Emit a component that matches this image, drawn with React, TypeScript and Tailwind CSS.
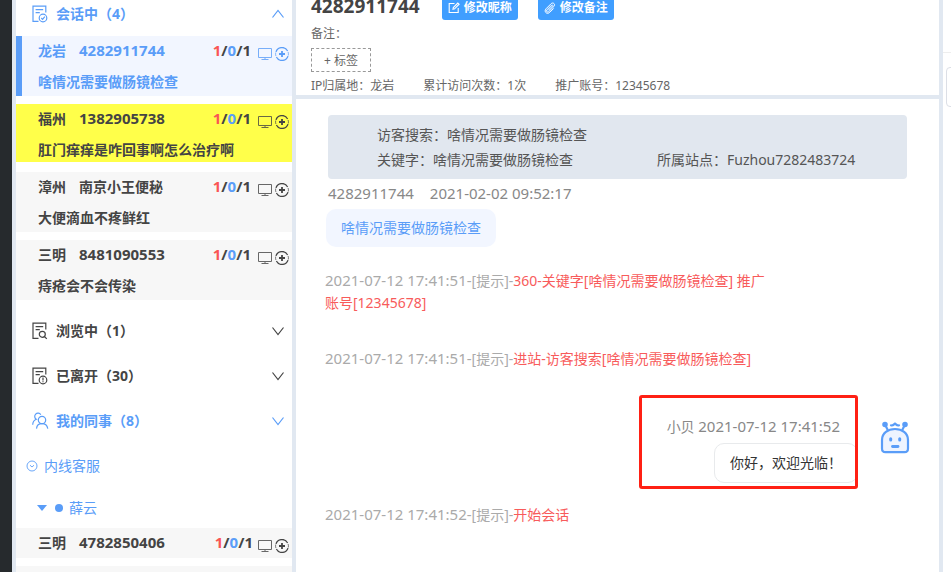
import type { ReactNode } from "react"
import clsx from "clsx"

type Visitor = {
  city: string
  name: string
  message?: string
  state?: "active" | "waiting"
}

const visitors: Visitor[] = [
  { city: "龙岩", name: "4282911744", message: "啥情况需要做肠镜检查", state: "active" },
  { city: "福州", name: "1382905738", message: "肛门痒痒是咋回事啊怎么治疗啊", state: "waiting" },
  { city: "漳州", name: "南京小王便秘", message: "大便滴血不疼鲜红" },
  { city: "三明", name: "8481090553", message: "痔疮会不会传染" },
]

function MonitorIcon() {
  return (
    <svg width="14" height="14" viewBox="0 0 14 14" fill="none" stroke="currentColor" strokeWidth="1" className="opacity-80">
      <path d="M.5 1.5h13v9H.5zM7 10.5v2M3.5 12.5h7" />
    </svg>
  )
}

function AddIcon() {
  return (
    <svg width="14" height="14" viewBox="0 0 14 14" fill="none" stroke="currentColor">
      <path d="M12.6 4A6.3 6.3 0 0 0 1 4.9M1.4 10A6.3 6.3 0 0 0 13 9.1" strokeWidth="1.3" />
      <path d="M.7 5.5A6.3 6.3 0 0 0 .9 9M13.3 8.5A6.3 6.3 0 0 0 13.1 5" strokeWidth=".7" />
      <path d="M7 4v6M4 7h6" strokeWidth="1.8" />
    </svg>
  )
}

function ListIcon({ children }: { children: ReactNode }) {
  return (
    <svg width="16" height="18" viewBox="0 0 16 18" fill="none" stroke="currentColor" strokeWidth="1.2">
      <path d="M6.5 16.4H1V1.1h12.8v6.4M3.6 4.6h7.6M3.6 7.6h4.2" />
      {children}
    </svg>
  )
}

function ChatIcon() {
  return (
    <ListIcon>
      <circle cx="11" cy="13" r="3.8" />
      <path d="m9.3 13 1.3 1.3 2.2-2.6" />
    </ListIcon>
  )
}

function BrowseIcon() {
  return (
    <ListIcon>
      <circle cx="10.3" cy="12.3" r="3" />
      <path d="m12.4 14.5 2.4 2.4" />
    </ListIcon>
  )
}

function LeftIcon() {
  return (
    <ListIcon>
      <circle cx="11" cy="13" r="3.8" />
      <path d="M11 10.6v3M11 14.3v1" />
    </ListIcon>
  )
}

function TeamIcon() {
  return (
    <svg width="17" height="18" viewBox="0 0 17 18" fill="none" stroke="currentColor" strokeWidth="1.2">
      <circle cx="10" cy="8" r="3.7" />
      <path d="M4.5 16.6c.3-3 2.5-4.9 5.5-4.9s5.2 1.9 5.8 4.9M8.8 2.7A3.3 3.3 0 1 0 4.3 7.3C2 8.2.8 9.9.7 12.7" />
    </svg>
  )
}

function Chevron({ up = false }: { up?: boolean }) {
  return (
    <svg width="14" height="10" viewBox="0 0 14 10" fill="none" stroke="currentColor" strokeWidth="1.2">
      <path d={up ? "M1.5 8.5 7 1.5l5.5 7" : "M1.5 1.5 7 8.5l5.5-7"} />
    </svg>
  )
}

function EditIcon() {
  return (
    <svg width="12" height="12" viewBox="0 0 12 12" fill="none" stroke="currentColor" strokeWidth="1.1">
      <path d="M6.5 1.5H1.2v9h9V6M5 7.2l.3-1.700L9.800 1l1.300 1.200-4.500 4.600z" />
    </svg>
  )
}

function ClipIcon() {
  return (
    <svg width="12" height="12" viewBox="0 0 12 12" fill="none" stroke="currentColor" strokeWidth="1">
      <path d="M4.3 8.3 8.6 4c.6-.6-.3-1.5-.9-.9L2.9 7.9c-1.2 1.3.6 3 1.800 1.800l5.200-5.200c2-2.200-.9-4.700-2.800-2.800L2 6.800c-2.500 2.800 1 6.200 3.700 3.600l4-4" />
    </svg>
  )
}

function RobotAvatar() {
  return (
    <svg width="32" height="36" viewBox="0 0 32 36" fill="none" stroke="#5a9df8" strokeWidth="2.2" strokeLinecap="round" strokeLinejoin="round">
      <path d="M3 20C3 13 9 9 16 9s13 4 13 11v8.500c0 2.500-1.200 3.700-3.500 3.700h-19C4.200 32.200 3 31 3 28.500z" fill="#eef4ff" />
      <path d="m8.500 9.500-2-4M23.500 9.500l2-4M12 5.300c1.500.8 2.600-.6 4-1.800 1.400 1.200 2.500 2.600 4 1.800" />
      <circle cx="6" cy="4.500" r="1.700" fill="#5a9df8" />
      <circle cx="26" cy="4.500" r="1.700" fill="#5a9df8" />
      <path d="M11.700 18.700v1.200M20.700 18.700v1.200" strokeWidth="3" />
      <path d="M13.500 26.500h5.500" strokeWidth="2.800" />
    </svg>
  )
}

function VisitorRow({ city, name, message, state }: Visitor) {
  return (
    <li
      className={clsx(
        "border-l-6 pl-4 pr-[3px] font-bold",
        state === "active" && "mb-2 h-15 border-[#5a9df8] bg-[#f2f6ff] text-[#5a9df8]",
        state === "waiting" && "mb-2.5 h-[58px] border-[#ffff4a] bg-[#ffff4a]",
        !state && "mb-2 border-[#f7f7f7] bg-[#f7f7f7]",
        !state && (message ? "h-15" : "h-[30px]"),
      )}
    >
      <div className="flex h-[30px] items-center">
        <span className="w-[41px]">{city}</span>
        <span className={clsx("flex-1", /^\d/.test(name) && "text-[15px]")}>{name}</span>
        <span className={clsx("text-[15px] text-[#444]", message ? "mr-[7px]" : "mr-[5px]")}>
          <span className="text-[#fa5555]">1</span>/<span className="text-[#5a9df8]">0</span>/1
        </span>
        <span className="flex gap-[3px] pt-1.5">
          <MonitorIcon />
          <AddIcon />
        </span>
      </div>
      {message && <p className="h-[30px] leading-[32px]">{message}</p>}
    </li>
  )
}

function GroupHeader({ icon, label, open, blue }: { icon: ReactNode; label: string; open?: boolean; blue?: boolean }) {
  return (
    <button
      type="button"
      className={clsx("flex h-[45px] w-full items-center pl-4 pr-[7px] text-left font-bold", blue && "text-[#5a9df8]")}
    >
      <span className="w-6">{icon}</span>
      <span className="flex-1">{label}</span>
      <Chevron up={open} />
    </button>
  )
}

function Sidebar() {
  return (
    <aside className="w-[284px] shrink-0 overflow-hidden border-x-4 border-[#e1e8f1] bg-white">
      <div className="-mt-[9px]">
        <GroupHeader icon={<ChatIcon />} label="会话中（4）" open blue />
      </div>
      <ul>
        {visitors.map((visitor) => (
          <VisitorRow key={visitor.name} {...visitor} />
        ))}
      </ul>
      <GroupHeader icon={<BrowseIcon />} label="浏览中（1）" />
      <GroupHeader icon={<LeftIcon />} label="已离开（30）" />
      <GroupHeader icon={<TeamIcon />} label="我的同事（8）" blue />
      <button type="button" className="flex h-[45px] items-center gap-1.5 pl-2.5 text-[#5a9df8]">
        <svg width="12" height="12" viewBox="0 0 12 12" fill="none" stroke="currentColor" strokeWidth=".9">
          <circle cx="6" cy="6" r="5" />
          <path d="m4 5.2 2 1.8 2-1.8" />
        </svg>
        内线客服
      </button>
      <button type="button" className="flex h-10 items-center pl-[21px] text-[#5a9df8]">
        <svg width="10" height="6" viewBox="0 0 10 6" fill="currentColor">
          <path d="M0 0h10L5 6z" />
        </svg>
        <span className="ml-2 mr-1.5 size-2 rounded-full bg-[#5a9df8]" />
        薛云
      </button>
      <ul>
        <VisitorRow city="三明" name="4782850406" />
        <li className="h-[30px] bg-[#f7f7f7]" />
      </ul>
    </aside>
  )
}

function VisitorHeader() {
  return (
    <header className="h-[99px] shrink-0 overflow-hidden border-b-4 border-[#e1e8f1] pl-[15px] text-xs text-[#666]">
      <div className="-mt-2 flex h-7 items-center gap-5 text-white">
        <h1 className="mr-0.5 pt-0.5 text-[19px] font-bold text-[#444]">4282911744</h1>
        <button type="button" className="flex h-7 items-center gap-1 rounded-[3px] bg-[#409eff] px-1.5 pt-1 font-bold">
          <EditIcon />
          修改昵称
        </button>
        <button type="button" className="flex h-7 items-center gap-1 rounded-[3px] bg-[#409eff] px-1.5 pt-1 font-bold">
          <ClipIcon />
          修改备注
        </button>
      </div>
      <p className="h-7 leading-[27px]">备注：</p>
      <button type="button" className="block h-6 w-[60px] border border-dashed border-[#999] pt-px">
        + 标签
      </button>
      <div className="flex gap-[29px] leading-[27px]">
        <span>IP归属地：龙岩</span>
        <span>累计访问次数：1次</span>
        <span>推广账号：12345678</span>
      </div>
    </header>
  )
}

function SystemMessage({ time, children }: { time: string; children: ReactNode }) {
  return (
    <p className="ml-[29px] max-w-[450px] leading-[22px] text-[#f85b5b]">
      <span className="text-[#aaa]">
        <span className="text-[15px] leading-none">{time}-</span>[提示]-
      </span>
      {children}
    </p>
  )
}

function Conversation() {
  return (
    <section className="flex flex-1 flex-col pt-4">
      <dl className="mx-8 grid grid-cols-[280px_1fr] rounded bg-[#e1e7ef] py-[7px] pl-[49px] leading-[25px] text-[#555]">
        <div className="col-span-2 flex">
          <dt>访客搜索：</dt>
          <dd>啥情况需要做肠镜检查</dd>
        </div>
        <div className="flex">
          <dt>关键字：</dt>
          <dd>啥情况需要做肠镜检查</dd>
        </div>
        <div className="flex">
          <dt>所属站点：</dt>
          <dd>Fuzhou7282483724</dd>
        </div>
      </dl>

      <div className="ml-8 flex h-[30px] items-center gap-4 text-[15px] text-[#888]">
        <span>4282911744</span>
        <time>2021-02-02 09:52:17</time>
      </div>
      <p className="ml-[30px] self-start rounded-[10px] bg-[#f2f6ff] px-[15px] leading-[38px] text-[#5a9df8]">
        啥情况需要做肠镜检查
      </p>

      <div className="mt-[23px] flex flex-col gap-[34px]">
        <SystemMessage time="2021-07-12 17:41:51">360-关键字[啥情况需要做肠镜检查] 推广账号[12345678]</SystemMessage>
        <SystemMessage time="2021-07-12 17:41:51">进站-访客搜索[啥情况需要做肠镜检查]</SystemMessage>
      </div>

      <div className="mb-[21px] mt-[41px] flex items-start justify-end gap-[21px] pr-7">
        <div className="relative flex flex-col items-end">
          <p className="mr-[18px] leading-[32px] text-[#888]">
            小贝 <time className="text-[15px] leading-none">2021-07-12 17:41:52</time>
          </p>
          <p className="rounded-[10px] border border-[#e8eaec] px-[15px] leading-[38px] text-[#333]">你好，欢迎光临！</p>
          <span className="absolute -bottom-1.5 -top-4 right-0 w-[219px] rounded-[3px] border-3 border-[#ff2014]" />
        </div>
        <div className="pt-[9px]">
          <RobotAvatar />
        </div>
      </div>

      <SystemMessage time="2021-07-12 17:41:52">开始会话</SystemMessage>
    </section>
  )
}

export default function App() {
  return (
    <div className="flex h-screen overflow-hidden bg-white font-['Noto_Sans','Noto_Sans_CJK_SC',sans-serif] text-sm text-[#444]">
      <nav className="w-3 shrink-0 bg-[#262a2d]" />
      <Sidebar />
      <main className="flex min-w-0 flex-1 flex-col">
        <VisitorHeader />
        <Conversation />
      </main>
      <aside className="w-3 shrink-0 overflow-hidden border-l-4 border-[#e1e8f1]">
        <div className="h-[53px] border-b border-[#eee]" />
        <div className="ml-[3px] mt-3.5 h-10 w-20 rounded border border-[#dcdfe6]" />
      </aside>
    </div>
  )
}
